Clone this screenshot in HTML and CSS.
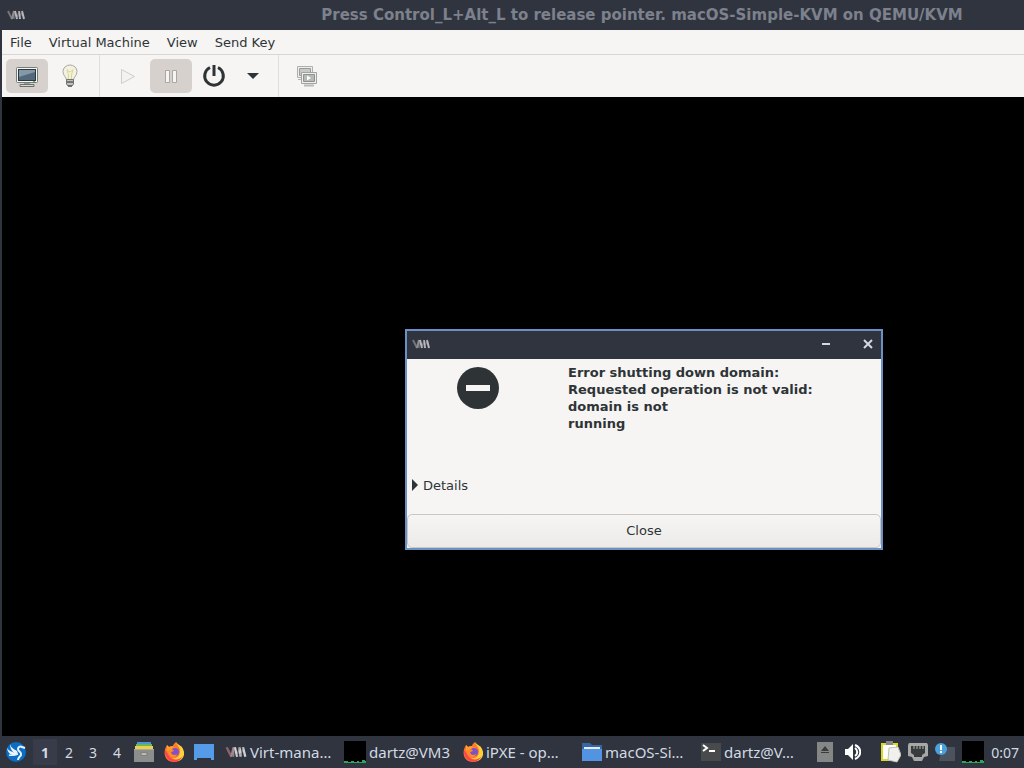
FILE: index.html
```html
<!DOCTYPE html>
<html lang="en">
<head>
    <meta charset="UTF-8">
    <meta name="viewport" content="width=device-width, initial-scale=1.0">
    <title>macOS-Simple-KVM on QEMU/KVM</title>
    <link rel="stylesheet" href="styles.css">
</head>
<body>
    <!-- Shared icons -->
    <svg class="sprite" aria-hidden="true">
        <symbol id="vm-logo" viewBox="0 0 18 12">
            <path d="M1 2l4 8" fill="none" stroke="#77747b" stroke-width="2"/>
            <path d="M5 10l2-8" fill="none" stroke="#8f8c92" stroke-width="2"/>
            <path d="M8 2l2 8M12 2l1 8M15 2l2 8" fill="none" stroke="#b9b7bc" stroke-width="2"/>
            <path d="M10 9l2-7M13 9l2-7M7 3l0 7" fill="none" stroke="#8f8d92" stroke-width="1"/>
        </symbol>
        <symbol id="firefox" viewBox="0 0 20 20">
            <path d="M3 3l2 2c1-1 3-1 4-1 0-2 2-3 3-4 0 2 2 3 4 5l1-1c4 5 4 16-7 16C1 20-2 11 3 3z" fill="#ff7a2d"/>
            <path d="M12 0c0 3 4 4 4 9 0 6-4 8-8 7 7 7 15-1 11-9-1-3-5-4-7-7z" fill="#ffd23c"/>
            <path d="M1 8c-1 12 13 16 18 6-4 5-12 5-15-2z" fill="#fb464f"/>
            <path d="M3 3l2 2c2-1 4-1 5 0L7 8l-4 1z" fill="#ffa02e"/>
            <circle cx="11" cy="10" r="4" fill="#8052c8"/>
            <path d="M5 8c2-2 4-1 5 1l-3 1c0 3 4 4 6 2-1 4-8 4-9-1z" fill="#ff8b25"/>
        </symbol>
        <symbol id="monitor-graph" viewBox="0 0 22 22">
            <path d="M0 0h22v22H0z" fill="#000"/>
            <path d="M0 20h4v1h3v-1h3v1h3v-1h2v1h3v-2h3v1h1v2H0z" fill="#25a862"/>
        </symbol>
    </svg>

    <header class="titlebar">
        <svg class="vm-icon"><use href="#vm-logo"/></svg>
        <h1>Press Control_L+Alt_L to release pointer. macOS-Simple-KVM on QEMU/KVM</h1>
    </header>

    <main class="window">
        <nav class="menubar">
            <button>File</button>
            <button>Virtual Machine</button>
            <button>View</button>
            <button>Send Key</button>
        </nav>

        <div class="toolbar">
            <div class="group">
                <button class="tool active" aria-label="Console">
                    <svg width="24" height="24" viewBox="0 0 24 24">
                        <rect x="1.500" y="3.500" width="21" height="15" rx="1" fill="#f5f5f2" stroke="#777b78"/>
                        <rect x="3.500" y="5.500" width="17" height="11" fill="#53687b" stroke="#283845"/>
                        <path d="M4 6h16v2L4 13z" fill="#8598a8"/>
                        <path d="M9 19h6v2H9z" fill="#999c98"/>
                        <path d="M5 20.500h14v2H5z" fill="#d7d9d5" stroke="#6c706c"/>
                        <path d="M18 17.500h2" stroke="#6bb43d"/>
                    </svg>
                </button>
                <button class="tool" aria-label="Details">
                    <svg width="24" height="24" viewBox="0 0 24 24">
                        <path d="M8.500 16c0-3-3.500-4-3.500-8.500a7 6.500 0 0 1 14 0c0 4.500-3.500 5.500-3.500 8.500z" fill="#f3f1df" stroke="#aaa99f"/>
                        <path d="M9 5.500l1.500 5.500V15M15 5.500L13.500 11V15M9 6l3 2 3-2" fill="none" stroke="#dcd591"/>
                        <path d="M8.500 15.500h7V20l-1.500 2h-4l-1.500-2z" fill="#c1c3c2" stroke="#727673"/>
                        <path d="M9 18h6M10 22h4" stroke="#585d5b" stroke-width="1.500"/>
                    </svg>
                </button>
            </div>
            <div class="group">
                <button class="tool" aria-label="Run" disabled>
                    <svg width="24" height="24" viewBox="0 0 24 24"><path d="M5.500 5.500v14l13-7z" fill="#f3f2f0" stroke="#cfcdca"/></svg>
                </button>
                <button class="tool active" aria-label="Pause">
                    <svg width="24" height="24" viewBox="0 0 24 24"><path d="M6.500 6.500h4v12h-4zM13.500 6.500h4v12h-4z" fill="#f6f5f3" stroke="#a9a7a2"/></svg>
                </button>
                <button class="tool" aria-label="Shut down">
                    <svg width="24" height="24" viewBox="0 0 24 24"><path d="M8 3.500a9.300 9.300 0 1 0 8 0M12 1v11" fill="none" stroke="#2e3436" stroke-width="3"/></svg>
                </button>
                <button class="tool arrow" aria-label="Shutdown options">
                    <svg width="12" height="6" viewBox="0 0 12 6"><path d="M0 0h12L6 6z" fill="#2e3436"/></svg>
                </button>
            </div>
            <div class="group">
                <button class="tool" aria-label="Manage snapshots">
                    <svg width="24" height="24" viewBox="0 0 24 24">
                        <path d="M2.500 2.500h15v11h-15z" fill="#eeeeec" stroke="#aeb0ad"/>
                        <path d="M4.500 4.500h11v7h-11z" fill="#c6c9c7" stroke="#989c99"/>
                        <path d="M3 15.500h4" stroke="#b0b2af"/>
                        <path d="M6.500 8.500h15v11h-15z" fill="#eeeeec" stroke="#a1a4a1"/>
                        <path d="M8.500 10.500h11v7h-11z" fill="#b5b9b7" stroke="#8f9390"/>
                        <path d="M12 11.500v5l4-2.500z" fill="#fff"/>
                        <path d="M9 21.500h10" stroke="#b8bab7" stroke-width="2"/>
                    </svg>
                </button>
            </div>
        </div>

        <section class="screen">
            <div class="dialog" role="alertdialog" aria-labelledby="message">
                <div class="dialog-bar">
                    <svg class="vm-icon"><use href="#vm-logo"/></svg>
                    <button class="minimize" aria-label="Minimize">
                        <svg width="10" height="10" viewBox="0 0 10 10"><path d="M1 5h8" stroke="#d3dae3" stroke-width="2"/></svg>
                    </button>
                    <button aria-label="Close window">
                        <svg width="10" height="10" viewBox="0 0 10 10"><path d="M1 1l8 8M9 1L1 9" stroke="#d3dae3" stroke-width="2"/></svg>
                    </button>
                </div>
                <div class="dialog-content">
                    <div class="dialog-icon">
                        <svg width="42" height="42" viewBox="0 0 42 42"><circle cx="21" cy="21" r="21" fill="#2e3436"/><path d="M9 18h24v6H9z" fill="#f6f5f4"/></svg>
                    </div>
                    <p id="message">Error shutting down domain:<br>Requested operation is not valid:<br>domain is not<br>running</p>
                </div>
                <button class="details">
                    <svg width="6" height="12" viewBox="0 0 6 12"><path d="M0 0l6 6-6 6z" fill="#2e3436"/></svg>
                    Details
                </button>
                <button class="close">Close</button>
            </div>
        </section>
    </main>

    <footer class="taskbar">
        <button class="start" aria-label="Applications">
            <svg width="20" height="20" viewBox="0 0 20 20">
                <circle cx="10" cy="10" r="10" fill="#0b6ec4"/>
                <path d="M4 2c1 4 4 5 7 7l1 3c-2 0-4-1-5-2C5 8 4 5 4 2z" fill="#e9f4ff"/>
                <path d="M1 6c2 3 5 4 9 5l1 2c-5 1-9-1-10-7z" fill="#e9f4ff"/>
                <path d="M3 13c3 1 6 0 9-1" fill="none" stroke="#e9f4ff" stroke-width="1.500"/>
                <path d="M19 6l-3-1c-2-1-4 0-4 2 0 3 4 3 3 6-1 2-3 2-3 5" fill="none" stroke="#e9f4ff" stroke-width="2"/>
            </svg>
        </button>
        <div class="desktops">
            <button class="current">1</button>
            <button>2</button>
            <button>3</button>
            <button>4</button>
        </div>
        <div class="launchers">
            <button aria-label="Files">
                <svg width="20" height="20" viewBox="0 0 20 20">
                    <path d="M3 0h14v3H3z" fill="#5294cf"/><path d="M2 2h16v3H2z" fill="#68b85a"/><path d="M1 4h18v3H1z" fill="#f0cf4b"/>
                    <path d="M0 7h20v13H0z" fill="#8b8e8d"/><path d="M0 7h20v1H0z" fill="#a5a8a6"/>
                    <path d="M7 11h6v2H7z" fill="#fff" stroke="#777"/>
                </svg>
            </button>
            <button aria-label="Firefox"><svg width="20" height="20"><use href="#firefox"/></svg></button>
            <button aria-label="Show desktop">
                <svg width="20" height="20" viewBox="0 0 20 20"><path d="M0 2h20v16h-3v-2H3v2H0z" fill="#559be8"/></svg>
            </button>
        </div>
        <div class="tasks">
            <button>
                <svg width="22" height="14" viewBox="0 0 18 12">
                    <path d="M1 2l4 8" fill="none" stroke="#8d6568" stroke-width="2"/>
                    <path d="M5 10l2-8" fill="none" stroke="#a58487" stroke-width="2"/>
                    <path d="M8 2l2 8M12 2l1 8M15 2l2 8" fill="none" stroke="#d0d0d2" stroke-width="2"/>
                    <path d="M10 9l2-7M13 9l2-7M7 3l0 7" fill="none" stroke="#939397"/>
                </svg>
                <span>Virt-mana…</span>
            </button>
            <button><svg width="22" height="22"><use href="#monitor-graph"/></svg><span>dartz@VM3</span></button>
            <button><svg width="20" height="20"><use href="#firefox"/></svg><span>iPXE - op…</span></button>
            <button>
                <svg width="20" height="20" viewBox="0 0 20 20"><path d="M0 1h8l2 2h10v16H0z" fill="#3866a5"/><path d="M2 5h16v4H2z" fill="#e3eef8"/><path d="M0 7h20v12H0z" fill="#5294e2"/></svg>
                <span>macOS-Si…</span>
            </button>
            <button>
                <svg width="20" height="20" viewBox="0 0 20 20"><path d="M0 1h20v18H0z" fill="#484a4c"/><path d="M2 3l4 3-4 3" fill="none" stroke="#fff" stroke-width="2"/><path d="M8 9h6" stroke="#fff" stroke-width="2"/></svg>
                <span>dartz@V…</span>
            </button>
        </div>
        <div class="tray">
            <button aria-label="Removable media">
                <svg width="16" height="20" viewBox="0 0 16 20"><path d="M0 0h16v20H0z" fill="#858786"/><path d="M8 4l4 5H4zM4 10h8v1H4z" fill="#393c3e"/></svg>
            </button>
            <button class="volume" aria-label="Volume">
                <svg width="16" height="16" viewBox="0 0 16 16"><path d="M0 5h3l5-5v16l-5-5H0z" fill="#fff"/><path d="M10 4c3 2 3 6 0 8M10 1c7 3 7 11 0 14" fill="none" stroke="#fff" stroke-width="2"/></svg>
            </button>
            <button aria-label="Clipboard">
                <svg width="20" height="22" viewBox="0 0 20 22"><path d="M0 2h17v18H0z" fill="#d9da27"/><path d="M2 4h13v14H2z" fill="#fff"/><path d="M5 0h7v4H5z" fill="#888"/><path d="M8 7l9-1 3 8-4 7-9-2z" fill="#f0f0ed" stroke="#bfc0b9"/></svg>
            </button>
            <button aria-label="Network">
                <svg width="20" height="18" viewBox="0 0 20 18"><path d="M1 0h18l1 2v11l-4 1-2 4H6l-2-4-4-1V2z" fill="#a7a7a6"/><path d="M3 3h14v7l-3 2v2H6v-2l-3-2z" fill="#383b3d"/><path d="M6 3v3M9 3v3M12 3v3M15 3v3" stroke="#b5b5b3"/></svg>
            </button>
            <button aria-label="Notifications">
                <svg width="20" height="20" viewBox="0 0 20 20"><path d="M7 5h13v14H4z" fill="#4b535f"/><circle cx="6" cy="7" r="6" fill="#4ba1dc"/><path d="M6 3v5M6 9v2" stroke="#fff" stroke-width="2"/></svg>
            </button>
            <button aria-label="CPU load"><svg width="22" height="22"><use href="#monitor-graph"/></svg></button>
            <time>0:07</time>
        </div>
    </footer>
</body>
</html>
```
FILE: styles.css
```css
* {
    box-sizing: border-box;
}
body {
    margin: 0;
    height: 100vh;
    display: flex;
    flex-direction: column;
    overflow: hidden;
    background: #2f343f;
    color: #2e3436;
    font-family: "DejaVu Sans", sans-serif;
    font-size: 13px;
}
button {
    margin: 0;
    padding: 0;
    border: none;
    background: none;
    color: inherit;
    font: inherit;
}
svg {
    display: block;
    flex: none;
}
.sprite {
    position: absolute;
    width: 0;
    height: 0;
}
.vm-icon {
    width: 18px;
    height: 12px;
}
.titlebar {
    height: 30px;
    display: flex;
    align-items: center;
    padding: 0 7px;
    background: #2f343f;
}
.titlebar h1 {
    flex: 1;
    margin: 0;
    padding-left: 242px;
    text-align: center;
    white-space: nowrap;
    font-size: 15px;
    line-height: 30px;
    color: #7c818c;
}
.window {
    flex: 1;
    display: flex;
    flex-direction: column;
    min-height: 0;
    margin-left: 2px;
    background: #f6f5f4;
}
.menubar {
    height: 25px;
    display: flex;
    gap: 17px;
    padding: 0 8px;
    border-bottom: 1px solid #d8d5d2;
}
.toolbar {
    height: 42px;
    display: flex;
    align-items: center;
}
.group {
    display: flex;
    gap: 1px;
    padding: 4px 8px 4px 4px;
    height: 42px;
}
.group + .group {
    padding-left: 7px;
    border-left: 1px solid #e1dedb;
}
.tool {
    width: 42px;
    height: 34px;
    display: flex;
    align-items: center;
    justify-content: center;
    border-radius: 5px;
}
.tool.active {
    background: #d6d1cd;
}
.tool.arrow {
    width: 34px;
}
.screen {
    flex: 1;
    position: relative;
    background: #000;
}
/* floating window over the guest display */
.dialog {
    position: absolute;
    left: 403px;
    top: 232px;
    width: 478px;
    display: flex;
    flex-direction: column;
    border: 2px solid #6b90c6;
    background: #f6f5f4;
}
.dialog-bar {
    height: 28px;
    display: flex;
    align-items: center;
    gap: 32px;
    padding: 0 8px 2px 5px;
    background: #2f343f;
}
.minimize {
    margin-left: auto;
}
.dialog-content {
    display: grid;
    grid-template-columns: 142px 1fr;
    gap: 19px;
    min-height: 116px;
    padding-top: 5px;
}
.dialog-icon {
    display: flex;
    justify-content: center;
    padding-top: 3px;
}
.dialog-content p {
    margin: 0;
    font-weight: bold;
    line-height: 17px;
}
.details {
    display: flex;
    align-items: center;
    gap: 5px;
    height: 20px;
    padding-left: 5px;
    margin-bottom: 19px;
}
.close {
    height: 34px;
    padding-bottom: 2px;
    border: 1px solid #cdc7c2;
    border-radius: 5px;
    background: linear-gradient(#f6f5f4, #edebe9);
}
.taskbar {
    height: 32px;
    display: flex;
    align-items: center;
    padding: 0 5px 0 6px;
    background: #2f343f;
    color: #d3dae3;
    font-family: "Noto Sans", sans-serif;
    font-size: 14px;
}
.desktops {
    display: flex;
    padding: 0 5px 0 7px;
}
.desktops button {
    width: 24px;
    height: 26px;
}
.desktops .current {
    background: #383c4a;
    font-weight: bold;
}
.launchers {
    display: flex;
    gap: 10px;
    margin-right: 11px;
}
.tasks {
    flex: 1;
    display: flex;
    min-width: 0;
}
.tasks button {
    flex: 0 0 119px;
    display: flex;
    align-items: center;
    gap: 3px;
    white-space: nowrap;
    font-size: 15px;
}
.tray {
    display: flex;
    align-items: center;
    gap: 7px;
}
.volume {
    margin: 0 13px 0 5px;
}
```
